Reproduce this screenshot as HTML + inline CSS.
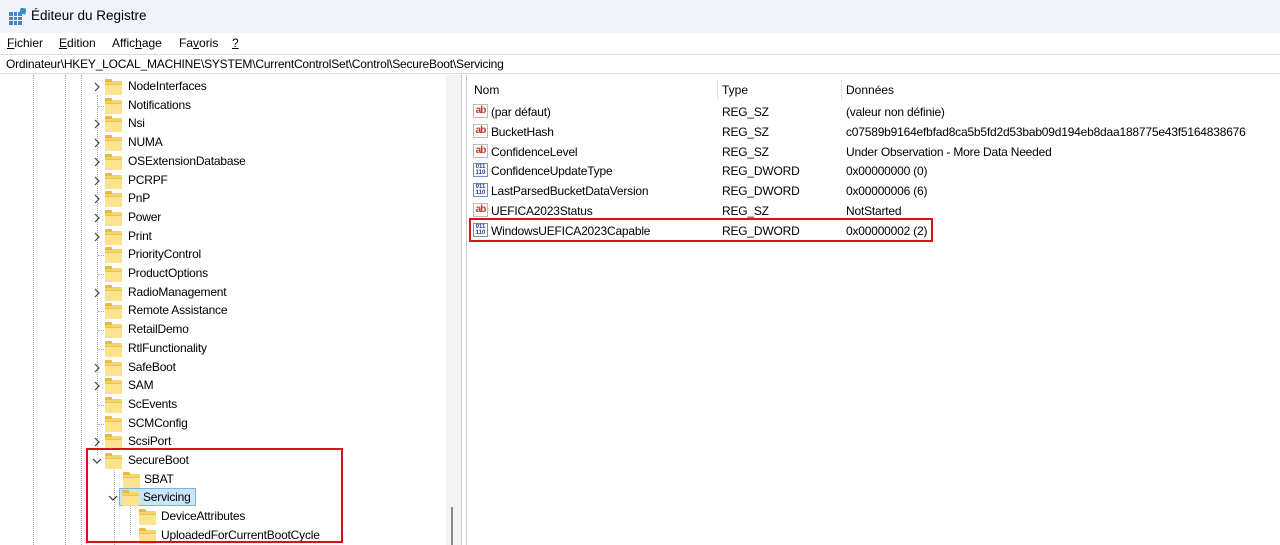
<!DOCTYPE html>
<html><head><meta charset="utf-8"><style>
*{margin:0;padding:0;box-sizing:border-box}
body{width:1280px;height:545px;overflow:hidden;background:#fff;font-family:"Liberation Sans",sans-serif;font-size:12px;color:#000;position:relative}
.a{position:absolute;white-space:nowrap}
.f{position:absolute;width:17px;height:13px;background:#f7d46a;border-radius:1px}
.f:before{content:"";position:absolute;left:0;top:-2px;width:7px;height:3px;background:#e9b93f;border-radius:1px 1px 0 0}
.f:after{content:"";position:absolute;left:0;top:3px;width:17px;height:10px;background:#fde38d;border-top:1px solid #e8c358}
.ab{position:absolute;width:15px;height:14px;border:1px solid #bbb;background:#fff;color:#c0392b;font-size:10px;font-weight:bold;line-height:12px;text-align:center;letter-spacing:-1px}
.dw{position:absolute;width:15px;height:14px;border:1px solid #7a8cc0;background:#fff;color:#1e3c9a;font-size:6px;line-height:6px;text-align:center;font-weight:bold}
.vl{position:absolute;border-left:1px dotted #aaa}
.n{letter-spacing:-0.2px}
</style></head><body>
<div class="a" style="left:0;top:0;width:1280px;height:33px;background:#f0f3f9"></div>
<svg class="a" style="left:9px;top:8px" width="17" height="17"><rect x="0" y="4" width="13" height="13" fill="#3b86d6"/><g stroke="#f0f3f9" stroke-width="1"><line x1="4.5" y1="4" x2="4.5" y2="17"/><line x1="8.5" y1="4" x2="8.5" y2="17"/><line x1="0" y1="8.5" x2="13" y2="8.5"/><line x1="0" y1="12.5" x2="13" y2="12.5"/></g><rect x="11" y="0" width="6" height="6" fill="#3b86d6" transform="rotate(15 14 3)"/></svg>
<div class="a" style="left:31px;top:8px;font-size:13.5px">Éditeur du Registre</div>
<div class="a" style="left:0;top:33px;width:1280px;height:20px;background:#fff"></div>
<div class="a" style="left:7px;top:36px"><u>F</u>ichier</div>
<div class="a" style="left:59px;top:36px"><u>E</u>dition</div>
<div class="a" style="left:112px;top:36px">Affic<u>h</u>age</div>
<div class="a" style="left:179px;top:36px">Fa<u>v</u>oris</div>
<div class="a" style="left:232px;top:36px"><u>?</u></div>
<div class="a" style="left:0;top:54px;width:1280px;height:20px;border-top:1px solid #dcdcdc;border-bottom:1px solid #dcdcdc;background:#fff"></div>
<div class="a n" style="left:6px;top:57px">Ordinateur\HKEY_LOCAL_MACHINE\SYSTEM\CurrentControlSet\Control\SecureBoot\Servicing</div>
<div class="a" style="left:0;top:75px;width:462px;height:470px;border-right:1px solid #ccc"></div>
<div class="a" style="left:446px;top:75px;width:15px;height:470px;background:#f3f3f3"></div>
<div class="a" style="left:451px;top:507px;width:2px;height:38px;background:#888"></div>
<div class="a" style="left:466px;top:75px;width:814px;height:470px;border-left:1px solid #ccc"></div>
<div class="vl" style="left:33px;top:75px;height:470px"></div>
<div class="vl" style="left:65px;top:75px;height:470px"></div>
<div class="vl" style="left:81px;top:75px;height:470px"></div>
<div class="vl" style="left:97px;top:95px;height:360px"></div>
<div class="vl" style="left:114px;top:468px;height:77px"></div>
<div class="vl" style="left:130px;top:505px;height:30px"></div>
<div id="tree"></div>
<script>
var items=[["NodeInterfaces",1],["Notifications",0],["Nsi",1],["NUMA",1],["OSExtensionDatabase",1],["PCRPF",1],["PnP",1],["Power",1],["Print",1],["PriorityControl",0],["ProductOptions",0],["RadioManagement",1],["Remote Assistance",0],["RetailDemo",0],["RtlFunctionality",0],["SafeBoot",1],["SAM",1],["ScEvents",0],["SCMConfig",0],["ScsiPort",1]];
var h="";
items.forEach(function(it,i){var y=79+i*18.7;
if(it[1])h+='<svg class="a" style="left:92px;top:'+(y+3)+'px" width="10" height="10"><path d="M3 1 L7 5 L3 9" stroke="#444" stroke-width="1.2" fill="none"/></svg>';
else h+='<div class="a" style="left:98px;top:'+(y+8)+'px;width:6px;border-top:1px dotted #aaa"></div>';
h+='<div class="f" style="left:105px;top:'+(y+2)+'px"></div><div class="a n" style="left:128px;top:'+y+'px">'+it[0]+'</div>';});
var y=79+20*18.7;
h+='<svg class="a" style="left:92px;top:'+(y+4)+'px" width="10" height="8"><path d="M1 2 L5 6 L9 2" stroke="#333" stroke-width="1.2" fill="none"/></svg><div class="f" style="left:105px;top:'+(y+2)+'px"></div><div class="a n" style="left:128px;top:'+y+'px">SecureBoot</div>';
y+=18.7;h+='<div class="f" style="left:123px;top:'+(y+2)+'px"></div><div class="a n" style="left:144px;top:'+y+'px">SBAT</div>';
y+=18.7;h+='<svg class="a" style="left:108px;top:'+(y+4)+'px" width="10" height="8"><path d="M1 2 L5 6 L9 2" stroke="#333" stroke-width="1.2" fill="none"/></svg><div class="a" style="left:119px;top:'+(y-2)+'px;width:77px;height:18px;background:#cce4f7;border:1px solid #7ab3e0"></div><div class="f" style="left:122px;top:'+(y+2)+'px"></div><div class="a n" style="left:143px;top:'+y+'px">Servicing</div>';
y+=18.7;h+='<div class="f" style="left:139px;top:'+(y+2)+'px"></div><div class="a n" style="left:161px;top:'+y+'px">DeviceAttributes</div>';
y+=18.7;h+='<div class="f" style="left:139px;top:'+(y+2)+'px"></div><div class="a n" style="left:161px;top:'+y+'px">UploadedForCurrentBootCycle</div>';
document.getElementById("tree").outerHTML=h;
</script>
<div class="a" style="left:86px;top:448px;width:257px;height:95px;border:2px solid #d9111b"></div>
<div class="a" style="left:474px;top:83px">Nom</div>
<div class="a" style="left:722px;top:83px">Type</div>
<div class="a" style="left:846px;top:83px">Données</div>
<div class="a" style="left:717px;top:80px;height:20px;border-left:1px solid #e5e5e5"></div>
<div class="a" style="left:841px;top:80px;height:20px;border-left:1px solid #e5e5e5"></div>
<div id="list"></div>
<script>
var rows=[["ab","(par défaut)","REG_SZ","(valeur non définie)"],["ab","BucketHash","REG_SZ","c07589b9164efbfad8ca5b5fd2d53bab09d194eb8daa188775e43f5164838676"],["ab","ConfidenceLevel","REG_SZ","Under Observation - More Data Needed"],["dw","ConfidenceUpdateType","REG_DWORD","0x00000000 (0)"],["dw","LastParsedBucketDataVersion","REG_DWORD","0x00000006 (6)"],["ab","UEFICA2023Status","REG_SZ","NotStarted"],["dw","WindowsUEFICA2023Capable","REG_DWORD","0x00000002 (2)"]];
var h="";rows.forEach(function(r,i){var y=105+i*19.8;
h+=(r[0]=="ab"?'<div class="ab" style="left:473px;top:'+(y-1)+'px">ab</div>':'<div class="dw" style="left:473px;top:'+(y-1)+'px">011<br>110</div>');
h+='<div class="a n" style="left:491px;top:'+y+'px">'+r[1]+'</div><div class="a n" style="left:722px;top:'+y+'px">'+r[2]+'</div><div class="a n" style="left:846px;top:'+y+'px">'+r[3]+'</div>';});
document.getElementById("list").outerHTML=h;
</script>
<div class="a" style="left:469px;top:218px;width:464px;height:24px;border:2px solid #d9111b"></div>
</body></html>
